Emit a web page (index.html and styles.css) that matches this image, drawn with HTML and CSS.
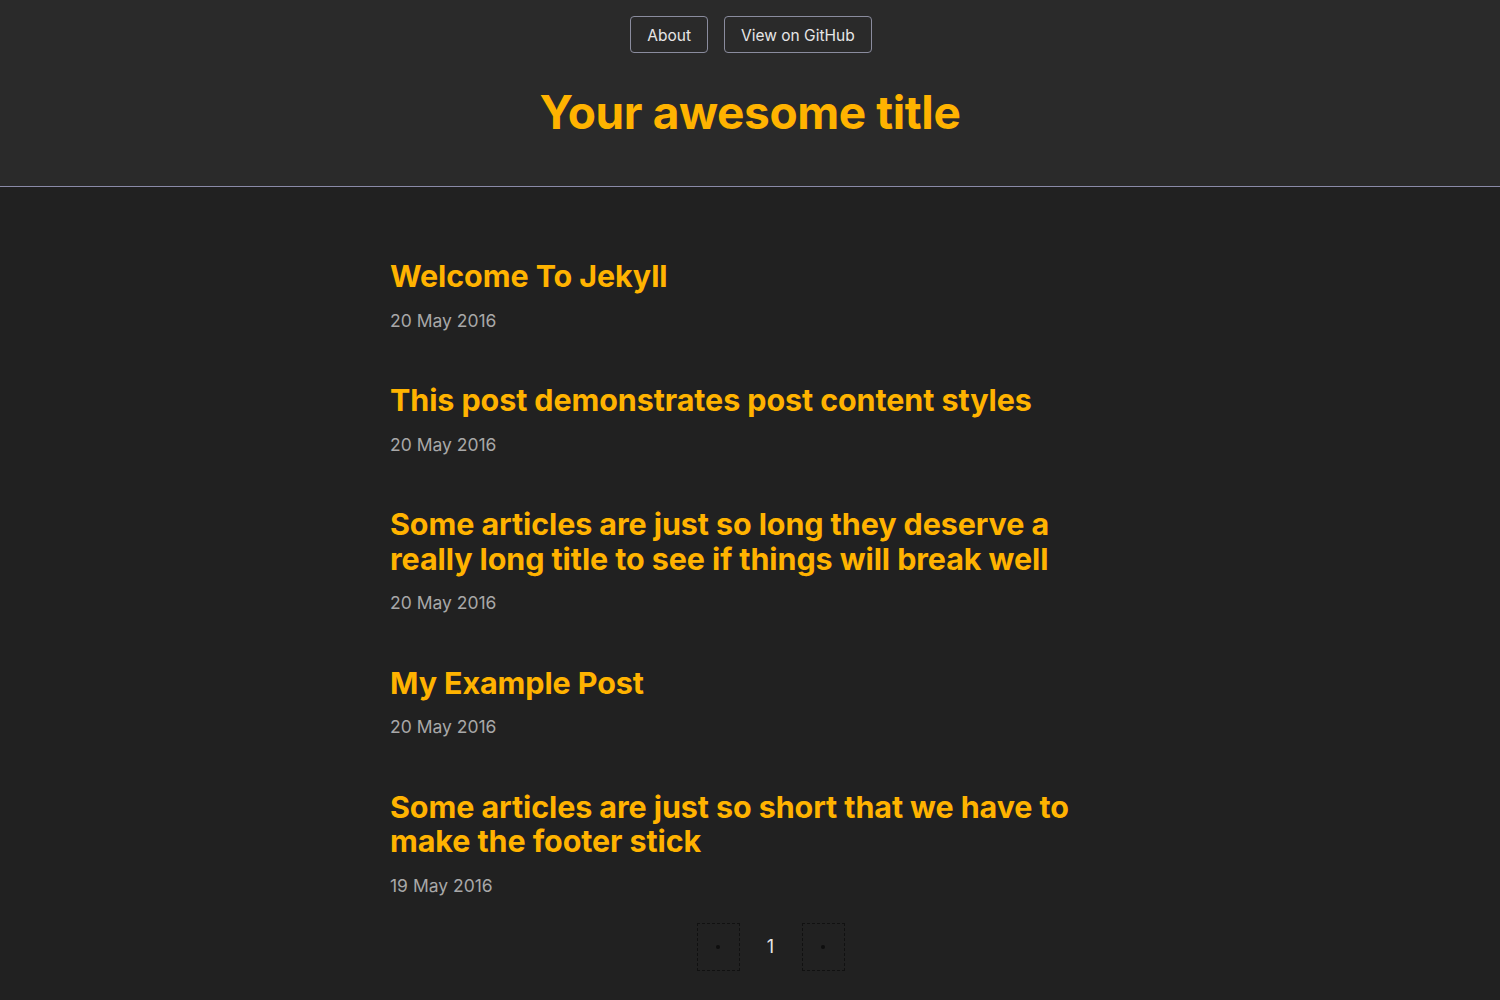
FILE: index.html
```html
<!DOCTYPE html>
<html lang="en">
<head>
<meta charset="utf-8">
<title>Your awesome title</title>
<link rel="stylesheet" href="styles.css">
</head>
<body>
<header class="site-header">
  <nav class="site-nav">
    <a class="nav-btn" href="#">About</a>
    <a class="nav-btn" href="#">View on GitHub</a>
  </nav>
  <h1 class="site-title">Your awesome title</h1>
</header>
<main class="content">
  <ul class="post-list">
    <li class="post">
      <h2 class="post-title"><a href="#">Welcome To Jekyll</a></h2>
      <div class="post-date">20 May 2016</div>
    </li>
    <li class="post">
      <h2 class="post-title"><a href="#">This post demonstrates post content styles</a></h2>
      <div class="post-date">20 May 2016</div>
    </li>
    <li class="post">
      <h2 class="post-title"><a href="#">Some articles are just so long they deserve a really long title to see if things will break well</a></h2>
      <div class="post-date">20 May 2016</div>
    </li>
    <li class="post">
      <h2 class="post-title"><a href="#">My Example Post</a></h2>
      <div class="post-date">20 May 2016</div>
    </li>
    <li class="post">
      <h2 class="post-title"><a href="#">Some articles are just so short that we have to make the footer stick</a></h2>
      <div class="post-date">19 May 2016</div>
    </li>
  </ul>
  <div class="pagination">
    <span class="page-box"><span class="dot"></span></span>
    <span class="page-num">1</span>
    <span class="page-box"><span class="dot"></span></span>
  </div>
</main>
</body>
</html>
```
FILE: styles.css
```css
html, body {
  margin: 0;
  padding: 0;
}
body {
  background: #212121;
  font-family: Inter, "Noto Sans", sans-serif;
  color: #dddddd;
}
a {
  text-decoration: none;
  color: inherit;
}
.site-header {
  background: #2a2a2a;
  border-bottom: 1px solid #8a8aa8;
  padding-top: 16px;
  height: 170px;
  box-sizing: content-box;
  display: flex;
  flex-direction: column;
  align-items: center;
}
.site-nav {
  display: flex;
  gap: 16px;
  padding-left: 2px;
}
.nav-btn {
  display: block;
  border: 1px solid #8a8c9e;
  border-radius: 4px;
  padding: 1px 16px 0;
  height: 34px;
  line-height: 35px;
  font-size: 15.5px;
  color: #e6e6e6;
}
.site-title {
  margin: 31px 0 0;
  font-size: 46px;
  line-height: 56px;
  font-weight: 700;
  color: #ffb300;
  letter-spacing: -0.4px;
}
.content {
  max-width: 720px;
  margin: 0 auto;
  padding-top: 72px;
}
.post-list {
  list-style: none;
  margin: 0;
  padding: 0;
}
.post {
  margin-bottom: 51.5px;
}
.post-title {
  margin: 0;
  font-size: 30.5px;
  line-height: 34.5px;
  font-weight: 700;
  color: #ffb300;
  letter-spacing: -0.1px;
}
.post-date {
  margin-top: 16px;
  font-size: 17.5px;
  line-height: 22px;
  color: #a8a8a8;
}
.pagination {
  display: flex;
  justify-content: center;
  align-items: center;
  gap: 20px;
  margin-top: -25.5px;
  padding-left: 41px;
}
.page-box {
  width: 41px;
  height: 46px;
  border: 1px dashed #111111;
  display: flex;
  align-items: center;
  justify-content: center;
}
.dot {
  width: 4px;
  height: 4px;
  border-radius: 50%;
  background: #0e0e0e;
}
.page-num {
  font-size: 18px;
  color: #e6e6e6;
  width: 22px;
  text-align: center;
}
```
